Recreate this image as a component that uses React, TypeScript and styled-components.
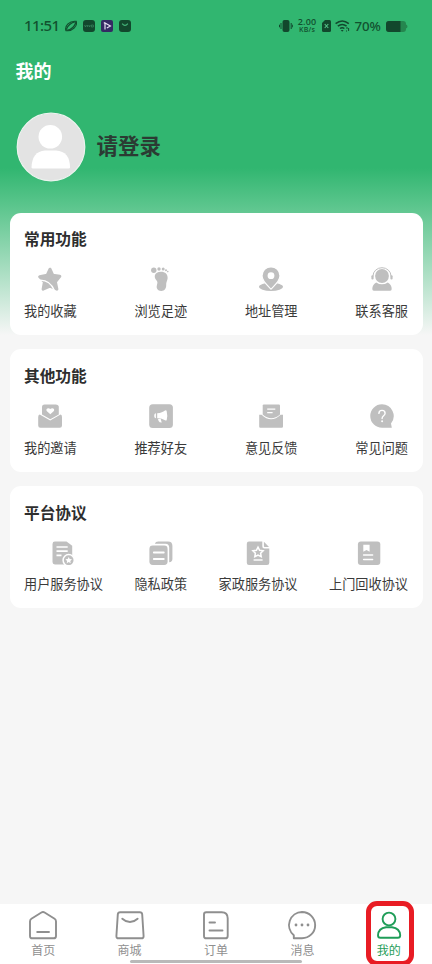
import React from "react";
import styled, { createGlobalStyle } from "styled-components";

const GlobalStyle = createGlobalStyle`
  * { box-sizing: border-box; }
  body { margin: 0; background: #f6f6f6; }
`;

const Screen = styled.div`
  position: relative;
  width: 432px;
  height: 964px;
  overflow: hidden;
  display: flex;
  flex-direction: column;
  font-family: "Noto Sans CJK SC", sans-serif;
  background: linear-gradient(180deg, #31b670 0, #31b670 168px, #5ac58c 205px, #f6f6f6 335px, #f6f6f6 100%);
`;

const StatusBar = styled.header`
  height: 52px;
  padding: 0 24px;
  display: flex;
  justify-content: space-between;
  align-items: center;
  color: #11512f;
  font-family: "Noto Sans", sans-serif;
`;

const StatusGroup = styled.div<{ $gap: number }>`
  display: flex;
  align-items: center;
  gap: ${(p) => p.$gap}px;
  svg { display: block; }
`;

const Clock = styled.span`
  width: 35px;
  margin-top: -3px;
  font-size: 15px;
  font-weight: 500;
  line-height: 20px;
  letter-spacing: -0.55px;
  white-space: nowrap;
`;

const Speed = styled.span`
  display: flex;
  flex-direction: column;
  align-items: center;
  width: 20px;
  font-family: "Open Sans", sans-serif;
  font-weight: 600;
  white-space: nowrap;
  span { font-size: 9px; line-height: 9px; letter-spacing: 0.2px; margin-top: -1px; }
  small { font-size: 7px; line-height: 8px; letter-spacing: 0.2px; }
`;

const Percent = styled.span`
  width: 27px;
  font-size: 13.3px;
  font-weight: 500;
  line-height: 18px;
  letter-spacing: -0.1px;
`;

const PageTitle = styled.h1`
  margin: 6px 0 0 15.5px;
  height: 24px;
  line-height: 24px;
  font-size: 18px;
  font-weight: 700;
  color: #fff;
`;

const Profile = styled.section`
  display: flex;
  align-items: center;
  gap: 10.5px;
  margin: 30px 0 0 16px;
  height: 70px;
  svg { display: block; }
`;

const LoginText = styled.span`
  font-size: 21.5px;
  line-height: 30px;
  font-weight: 700;
  color: #2b3b33;
  margin-top: -4px;
`;

const Cards = styled.main`
  display: flex;
  flex-direction: column;
  gap: 14.5px;
  margin: 30.5px 9.5px 0 9.5px;
`;

const Card = styled.section`
  height: 122.3px;
  padding: 15.5px 14.5px 0;
  border-radius: 11px;
  background: #fff;
`;

const CardTitle = styled.h2`
  margin: 0;
  font-size: 15.7px;
  line-height: 22px;
  font-weight: 700;
  color: #2e2e2e;
`;

const Row = styled.div`
  display: flex;
  justify-content: space-between;
  margin-top: 17px;
`;

const Item = styled.div`
  display: flex;
  flex-direction: column;
  align-items: center;
  font-size: 13.17px;
  line-height: 20px;
  color: #3a3a3a;
  white-space: nowrap;
  svg { display: block; margin-bottom: 9.8px; }
`;

const TabBar = styled.nav`
  display: flex;
  height: 60px;
  margin-top: auto;
  background: #fff;
`;

const Tab = styled.div<{ $active?: boolean }>`
  flex: 1;
  display: flex;
  flex-direction: column;
  align-items: center;
  padding-top: 6px;
  font-size: 12px;
  line-height: 18px;
  color: ${(p) => (p.$active ? "#1f9d58" : "#8f8f8f")};
  svg { display: block; margin-bottom: 1px; }
`;

const HomeIndicator = styled.div`
  position: absolute;
  left: 130px;
  bottom: 1px;
  width: 172px;
  height: 3px;
  border-radius: 2px;
  background: #b9b9b9;
`;

const Highlight = styled.div`
  position: absolute;
  left: 366px;
  top: 901px;
  width: 48px;
  height: 65px;
  border: 5px solid #e81c24;
  border-radius: 11px;
`;

const G = "#bfbfbf";

const icons: Record<string, React.ReactNode> = {
  star: (
    <>
      <path d="M12 2.2 14.9 8.3 21.8 9.2 17.4 14.8 18.9 22.2 12 19.2 5.1 22.2 6.4 15 1.7 9.8 9.1 8.3Z" fill={G} stroke={G} strokeWidth="3" strokeLinejoin="round" />
      <path d="M.5 13.2Q12 12.2 16.6 24" fill="none" stroke="#fff" strokeWidth="1.4" />
    </>
  ),
  foot: (
    <g fill={G}>
      <circle cx="4.8" cy="3.3" r="2.7" />
      <circle cx="10" cy="2" r="1.7" />
      <circle cx="14.2" cy="2.1" r="1.5" />
      <circle cx="17" cy="3.2" r="1" />
      <circle cx="18.8" cy="4.6" r=".8" />
      <path d="M12 4.8C16.2 4.8 19 7.4 18.6 11.4 18.2 14 17 15 17.2 18 17.4 21.5 15.4 24 12.2 23.9 8.8 23.7 7.2 21.5 7.8 18.7 8.4 16.2 9 14.8 7.4 13.2 4.6 10.4 5 4.9 12 4.8Z" />
    </g>
  ),
  pin: (
    <>
      <ellipse cx="12" cy="19.8" rx="12" ry="4.1" fill={G} />
      <path d="M12 22.2C8 18 3 14 3 8.8A9 9 0 0 1 21 8.8C21 14 16 18 12 22.2Z" fill={G} stroke="#fff" strokeWidth="1.2" />
      <circle cx="12" cy="8.7" r="3.4" fill="#fff" />
    </>
  ),
  service: (
    <>
      <circle cx="12" cy="9" r="6.9" fill={G} />
      <path d="M3 9A9 8.3 0 0 1 21 9" fill="none" stroke={G} strokeWidth="1" />
      <rect x="1.4" y="8.2" width="2.2" height="4.2" rx="1" fill={G} />
      <rect x="20.4" y="8.2" width="2.2" height="4.2" rx="1" fill={G} />
      <path d="M6.2 15.4Q12 19.2 17.8 15.4 21.7 17.5 21.7 22 21.7 23.8 20.2 23.8H3.8Q2.3 23.8 2.3 22 2.3 17.5 6.2 15.4Z" fill={G} />
    </>
  ),
  invite: (
    <>
      <path d="M4 10.5V3.1Q4 .5 6.6 .5H17.6Q20.8 .5 20.8 3.1V10.5L12.3 15.3Z" fill={G} />
      <path d="M12.3 10.2 8.7 6.9C7.4 4.8 10.4 3 12.3 5.1 14.2 3 17.2 4.8 15.9 6.9Z" fill="#fff" />
      <path d="M1.7 10.6 12.2 16.6 22.6 10.6Q24 10.8 24 13V21.5Q24 23.7 21.8 23.7H2.4Q.2 23.7 .2 21.5V13Q.2 10.8 1.7 10.6Z" fill={G} />
    </>
  ),
  megaphone: (
    <>
      <rect x=".2" y=".3" width="23.7" height="23.7" rx="3.5" fill={G} />
      <path d="M8.2 9.2C12 9 14 7.8 16 6.4Q17.5 5.8 17.7 7.2 18.8 11.5 17.7 16 17.2 17 16 16.2 13 14.2 8.2 14.3Z" fill="#fff" />
      <path d="M6.9 9.2V14.2C4.7 14.1 4.7 9.3 6.9 9.2ZM9 15H11.7L12.7 18.6Q10.5 18.8 9.6 17Z" fill="#fff" />
    </>
  ),
  feedback: (
    <>
      <path d="M3.7 10.4V1.6Q3.7 .4 4.9 .4H19.8Q21 .4 21 1.6V10.4Q12.4 18 3.7 10.4Z" fill={G} />
      <path d="M8.2 5.2H16.3M8.2 8.6H13.6" stroke="#fff" strokeWidth="1.3" />
      <path d="M.2 10.8H2.6Q12 19.8 21.6 10.8H24V22.5Q24 23.8 22.8 23.8H1.3Q.2 23.8 .2 22.5Z" fill={G} />
    </>
  ),
  question: (
    <>
      <path d="M12 .3A11.7 11.7 0 0 1 21 19.4L21.8 23.8H12A11.7 11.7 0 0 1 12 .3Z" fill={G} />
      <path d="M8.9 9.4Q9 6.3 12.1 6.4 15.1 6.6 15.1 9.2 15.1 10.5 13.6 11.7 12.1 12.9 12.1 14.6" fill="none" stroke="#fff" strokeWidth="1.4" strokeLinecap="round" />
      <circle cx="12.1" cy="17.3" r="1" fill="#fff" />
    </>
  ),
  userDoc: (
    <>
      <path d="M3.9 .5H15.5L21.2 4.7V23.4H3.9Q1.5 23.4 1.5 21V2.9Q1.5 .5 3.9 .5Z" fill={G} />
      <path d="M5.5 6H16.7M5.5 10.1H16.7M5.5 14.4H10.5" stroke="#fff" strokeWidth="1.6" />
      <circle cx="17.7" cy="19.2" r="5.6" fill={G} stroke="#fff" strokeWidth="1.5" />
      <path d="m17.7 15.9 1 2.1 2.3.3-1.7 1.6.4 2.3-2-1.1-2 1.1.4-2.3-1.7-1.6 2.3-.3Z" fill="#fff" />
    </>
  ),
  privacy: (
    <>
      <path d="M5.8 2.8Q6.5 .4 9.2 .4H19Q23.4 .4 23.4 4.8V18Q23.4 21 20.2 21.3V6.6Q20.2 2.8 16.4 2.8Z" fill={G} />
      <rect x=".4" y="4.5" width="18.2" height="19.4" rx="3.4" fill={G} />
      <path d="M4.8 11.5H14.8M4.8 18H14.8" stroke="#fff" strokeWidth="1.8" strokeLinecap="round" />
    </>
  ),
  starDoc: (
    <>
      <path d="M3 .4H16.3V5.2Q16.3 7.4 18.3 7.4H23.3V21.7Q23.3 24 21 24H3Q.8 24 .8 21.7V2.7Q.8 .4 3 .4ZM17.9 .8 23 5.9H18.7Q17.9 5.9 17.9 5Z" fill={G} />
      <path d="m12 6.1 1.6 3.2 3.5.5-2.5 2.4.6 3.5-3.2-1.7-3.2 1.7.6-3.5-2.5-2.4 3.5-.5Z" fill="none" stroke="#fff" strokeWidth="1.5" />
      <path d="M7.6 19H16.6" stroke="#fff" strokeWidth="1.4" />
    </>
  ),
  bookDoc: (
    <>
      <rect x=".9" y=".4" width="22.4" height="23.6" rx="3" fill={G} />
      <path d="M6.3 3.8H12.6V10.8L9.5 9.1 6.3 10.8Z" fill="#fff" />
      <path d="M6.6 14H15.6M6.6 18.4H15.6" stroke="#fff" strokeWidth="1.5" strokeLinecap="round" />
    </>
  ),
};

const sections = [
  { title: "常用功能", items: [["star", "我的收藏"], ["foot", "浏览足迹"], ["pin", "地址管理"], ["service", "联系客服"]] },
  { title: "其他功能", items: [["invite", "我的邀请"], ["megaphone", "推荐好友"], ["feedback", "意见反馈"], ["question", "常见问题"]] },
  { title: "平台协议", items: [["userDoc", "用户服务协议"], ["privacy", "隐私政策"], ["starDoc", "家政服务协议"], ["bookDoc", "上门回收协议"]] },
];

const tabs: { label: string; active?: boolean; icon: React.ReactNode }[] = [
  { label: "首页", icon: <path d="M3.4 8.8 13.4 2.5Q15 1.5 16.6 2.5L26.6 8.8Q28 9.7 28 11.4V25.9Q28 28.3 25.6 28.3H4.4Q2 28.3 2 25.9V11.4Q2 9.7 3.4 8.8ZM9.2 22H21" /> },
  { label: "商城", icon: <path d="M5.2 2.2H24.8Q27 2.2 27.2 4.4L28.6 26Q28.7 28.3 26.4 28.3H3.6Q1.3 28.3 1.4 26L2.8 4.4Q3 2.2 5.2 2.2ZM7.3 8.7Q15 15.5 22.6 8.7" /> },
  { label: "订单", icon: <path d="M5.2 2.2H20.7Q26.7 2.2 26.7 8.3V25.9Q26.7 28.3 24.3 28.3H5.4Q3 28.3 3 25.9V4.5Q3 2.2 5.2 2.2ZM8.5 12.5H14M8.5 20.5H21.5" /> },
  {
    label: "消息",
    icon: (
      <>
        <path d="M15 2A13.1 13.1 0 1 1 15 28.3H6.8V25.2A13.1 13.1 0 0 1 15 2Z" />
        <g fill="currentColor" stroke="none"><circle cx="9" cy="15" r="1.4" /><circle cx="15" cy="15" r="1.4" /><circle cx="21" cy="15" r="1.4" /></g>
      </>
    ),
  },
  { label: "我的", active: true, icon: <><circle cx="15" cy="9" r="6.4" /><path d="M12 17.2H18Q25.8 18.2 26.2 25.2 26.2 27.8 23.8 27.8H6.4Q4 27.8 4 25.2 4.4 18.2 12 17.2Z" /></> },
];

export default function App() {
  return (
    <>
      <GlobalStyle />
      <Screen>
        <StatusBar>
          <StatusGroup $gap={6}>
            <Clock>11:51</Clock>
            <svg width="12" height="12" viewBox="0 0 12 12" fill="none" stroke="currentColor">
              <path d="M.9 10.6C-.6 6 4.4 .4 11.2 1.3 12.8 6 7.4 11.8 .9 10.6Z" strokeWidth="1.1" />
              <path d="M1.2 9.6Q3.4 3.2 10.6 1.6M1.6 10.4Q8.6 9.4 11 2.2" strokeWidth="1.3" />
            </svg>
            <svg width="12" height="12" viewBox="0 0 12 12">
              <rect width="12" height="12" rx="3" fill="#12482d" />
              <path d="m1.5 5 1 2 1-2M4.5 5v2m1.2-2 .8 2 .8-2M8.4 5h2v2h-2Z" fill="none" stroke="#42916a" strokeWidth=".6" />
            </svg>
            <svg width="12" height="12" viewBox="0 0 12 12">
              <rect width="12" height="12" rx="2" fill="#342a63" />
              <path d="M4 9.6V3L9.4 6 5.8 8M2.8 2.8h1.5" fill="none" stroke="#e8e0f5" strokeWidth="1.2" />
            </svg>
            <svg width="12" height="12" viewBox="0 0 12 12">
              <rect width="12" height="12" rx="3" fill="#12482d" />
              <path d="M3.2 3.6Q6 7.2 8.8 3.6" fill="none" stroke="#46b67b" strokeWidth="1.2" />
            </svg>
          </StatusGroup>
          <StatusGroup $gap={4.5}>
            <svg width="14" height="12" viewBox="0 0 14 12">
              <rect x="3.5" width="7" height="12" rx="2" fill="#12482d" />
              <path d="M2 3v6M12.2 3v6M.5 4.7v2.6M13.7 4.7v2.6" stroke="#12482d" />
            </svg>
            <Speed><span>2.00</span><small>KB/s</small></Speed>
            <svg width="9" height="12" viewBox="0 0 9 12">
              <path d="M3 0H7.5Q9 0 9 1.5V10.5Q9 12 7.5 12H1.5Q0 12 0 10.5V3Z" fill="#12482d" />
              <path d="m2.7 4 3.6 4m0-4L2.7 8" stroke="#57c489" strokeWidth="1.1" />
            </svg>
            <svg width="15" height="12" viewBox="0 0 15 12" fill="none" stroke="#12482d" strokeWidth="1.5">
              <path d="M.6 3.7Q7.2-1.8 13.8 3.7M2.8 6.2Q7.2 2.6 11.6 6.2M5 8.5Q7.2 6.8 9.4 8.5" />
              <path d="m5.8 10 1.4 1.8L8.6 10Z" fill="#12482d" stroke="none" />
              <path d="M12 7v2m1.6-1v3M11 11h1" strokeWidth="1" />
            </svg>
            <Percent>70%</Percent>
            <svg width="22" height="11" viewBox="0 0 22 11">
              <path d="M3 0H17Q20 0 20 3V3.5Q21.5 4 21.5 5.5T20 7.5V8Q20 11 17 11H3Q0 11 0 8V3Q0 0 3 0Z" fill="#25864f" />
              <path d="M3 0H14.5V11H3Q0 11 0 8V3Q0 0 3 0Z" fill="#12482d" />
            </svg>
          </StatusGroup>
        </StatusBar>
        <PageTitle>我的</PageTitle>
        <Profile>
          <svg width="70" height="70" viewBox="0 0 70 70">
            <circle cx="35" cy="35" r="33.8" fill="#e3e3e3" stroke="#edf3ef" strokeWidth="1.2" />
            <circle cx="34.3" cy="24.8" r="11.8" fill="#fff" />
            <path d="M29 38.5H40Q54 39.5 54 55.5 54 56.5 52.5 56.5H17Q15.5 56.5 15.5 55.5 16 39.5 29 38.5Z" fill="#fff" />
          </svg>
          <LoginText>请登录</LoginText>
        </Profile>
        <Cards>
          {sections.map((s) => (
            <Card key={s.title}>
              <CardTitle>{s.title}</CardTitle>
              <Row>
                {s.items.map(([icon, label]) => (
                  <Item key={label}>
                    <svg width="24" height="24" viewBox="0 0 24 24">{icons[icon]}</svg>
                    {label}
                  </Item>
                ))}
              </Row>
            </Card>
          ))}
        </Cards>
        <TabBar>
          {tabs.map((t) => (
            <Tab key={t.label} $active={t.active}>
              <svg width="30" height="30" viewBox="0 0 30 30" fill="none" stroke="currentColor" strokeWidth="1.9" strokeLinecap="round" strokeLinejoin="round">
                {t.icon}
              </svg>
              {t.label}
            </Tab>
          ))}
        </TabBar>
        <HomeIndicator />
        <Highlight />
      </Screen>
    </>
  );
}
